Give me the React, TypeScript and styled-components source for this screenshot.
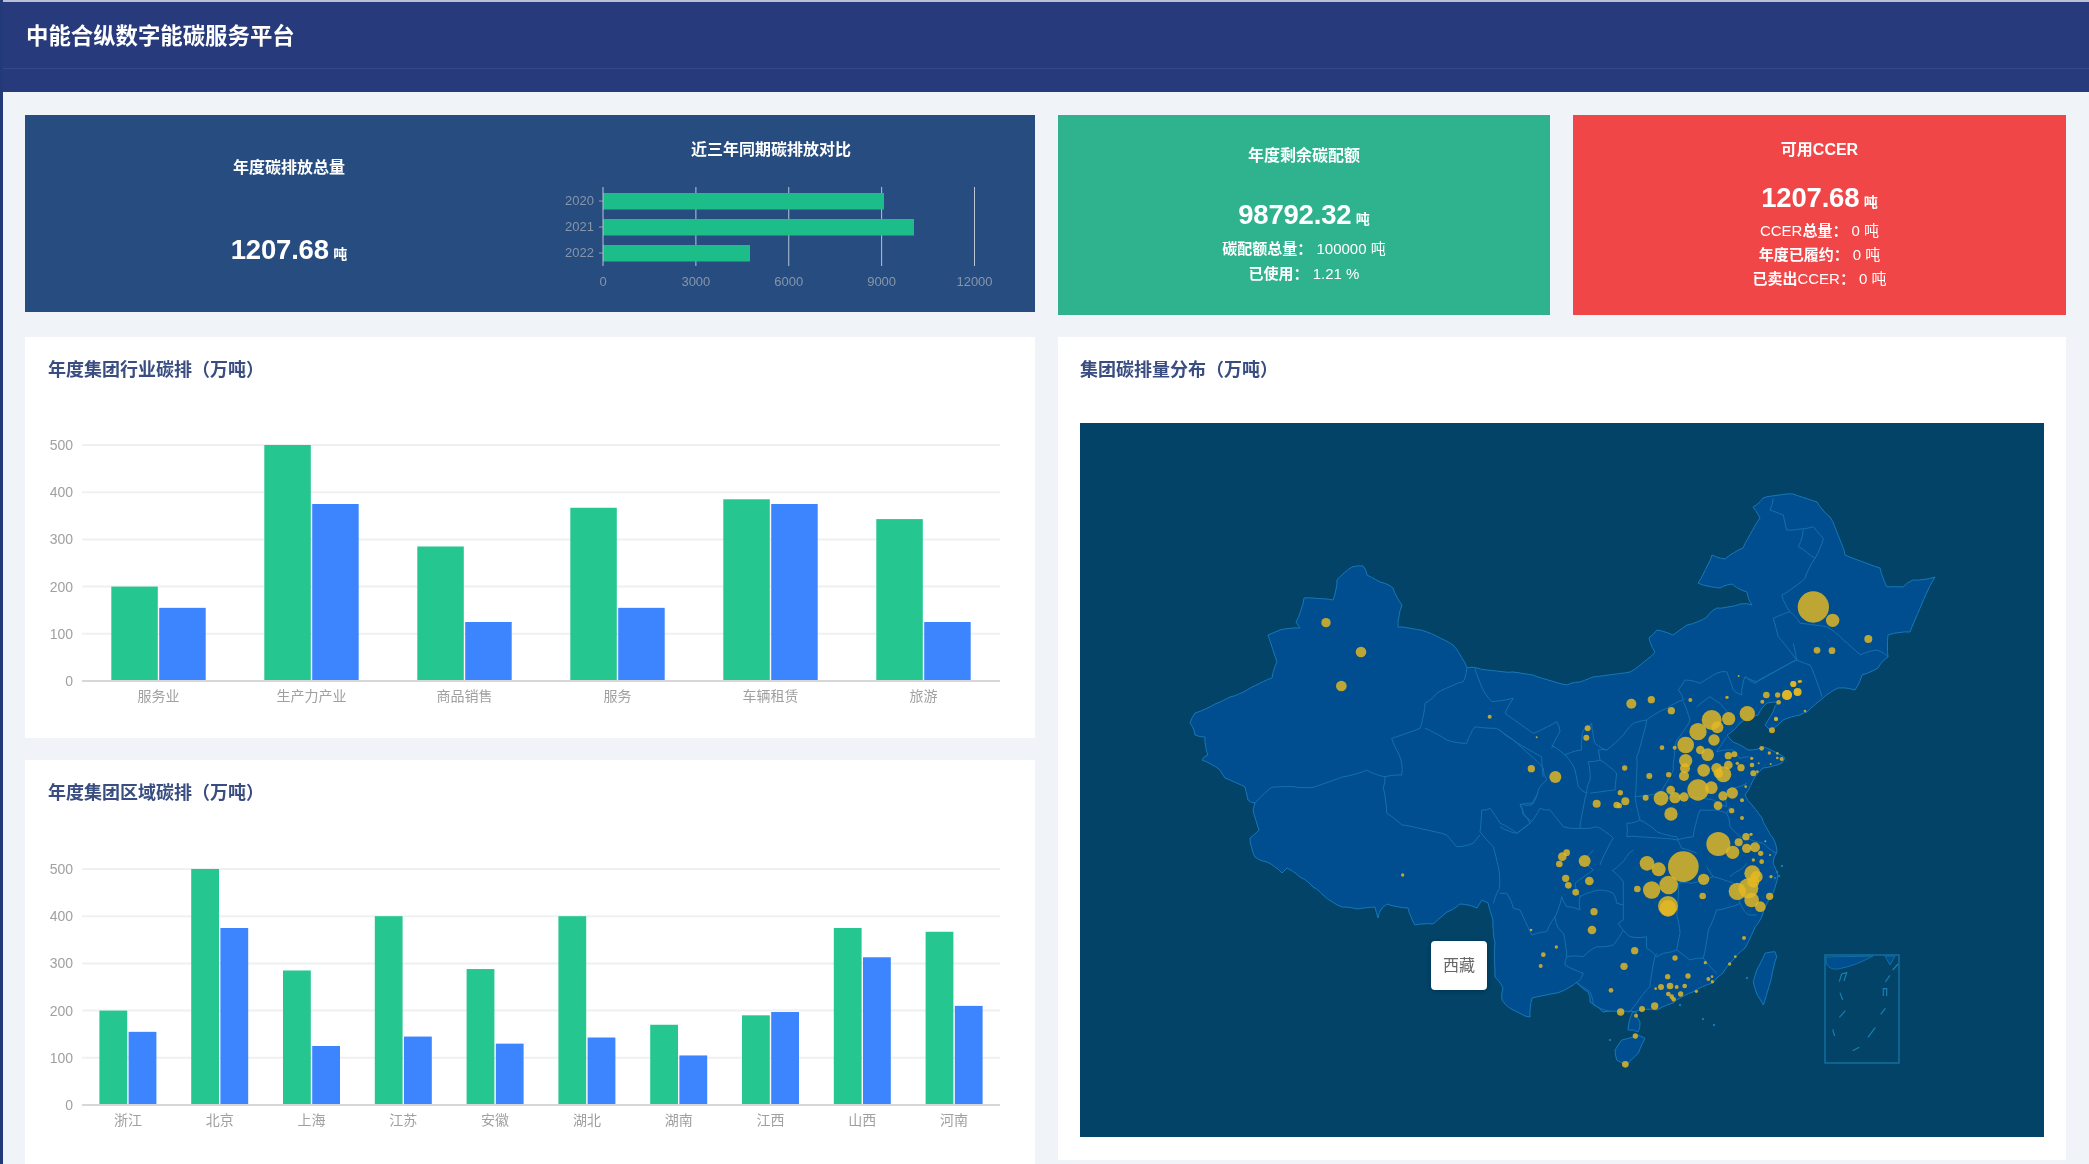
import styled, { createGlobalStyle } from "styled-components";

const GlobalStyle = createGlobalStyle`
  html, body {
    margin: 0;
    padding: 0;
    height: 100%;
    overflow: hidden;
    background: #f0f3f8;
  }
  * {
    box-sizing: border-box;
  }
`;

type Point = [number, number];

// reads "x,y x,y" taken from a crop of the picture back to page coordinates
function pts(s: string, ox = 0, oy = 0, k = 1): Point[] {
  return s.split(" ").map((p) => {
    const [x, y] = p.split(",").map(Number);
    return [ox + x * k, oy + y * k] as Point;
  });
}

// borders on a map are never straight, so break long segments up a little
function rough(points: Point[], closed = false, amount = 1): string {
  const list = closed ? [...points, points[0]] : points;
  let d = `M${list[0][0].toFixed(1)} ${list[0][1].toFixed(1)}`;
  for (let i = 1; i < list.length; i++) {
    const [x0, y0] = list[i - 1];
    const [x1, y1] = list[i];
    const len = Math.hypot(x1 - x0, y1 - y0);
    const steps = Math.max(1, Math.round(len / 5));
    for (let s = 1; s <= steps; s++) {
      const t = s / steps;
      const noise = s === steps ? 0 : Math.sin(x0 * 12.9 + y0 * 78.2 + s * 37.7) * amount;
      const x = x0 + (x1 - x0) * t + (-(y1 - y0) / (len || 1)) * noise;
      const y = y0 + (y1 - y0) * t + ((x1 - x0) / (len || 1)) * noise;
      d += `L${x.toFixed(1)} ${y.toFixed(1)}`;
    }
  }
  return closed ? d + "Z" : d;
}

const CHINA = pts(
  "1352,567 1363,566 1367,575 1380,582 1393,588 1402,605 1398,627 1427,632 1453,645 1467,668 1477,668 1513,672 1533,675 1567,685 1580,682 1593,677 1630,672 1655,652 1649,638 1657,630 1673,635 1687,625 1707,617 1717,608 1740,604 1752,605 1747,592 1732,584 1720,588 1707,586 1698,583 1712,555 1725,559 1743,548 1760,518 1753,507 1763,498 1793,494 1817,502 1830,517 1845,555 1880,568 1887,587 1903,587 1913,580 1935,577 1928,590 1910,632 1888,635 1888,657 1878,668 1862,675 1855,690 1838,688 1823,698 1807,712 1800,715 1783,720 1770,730 1765,725 1773,712 1778,702 1767,703 1758,715 1740,723 1727,735 1733,742 1748,750 1763,747 1785,758 1782,763 1763,768 1753,780 1745,795 1752,805 1762,818 1773,838 1777,852 1773,863 1778,875 1773,893 1763,913 1755,927 1745,948 1733,960 1723,973 1713,983 1693,992 1673,1003 1657,1010 1640,1010 1632,1013 1628,1030 1638,1032 1640,1022 1636,1012 1620,1012 1603,1012 1590,1002 1588,992 1577,982 1560,992 1557,993 1532,998 1530,1017 1525,1016 1513,1010 1502,1000 1503,988 1495,977 1495,970 1495,943 1493,920 1488,903 1482,900 1477,908 1460,904 1447,912 1433,924 1415,925 1408,908 1387,904 1382,908 1378,918 1375,907 1357,909 1342,907 1323,895 1313,887 1300,877 1287,868 1282,873 1267,862 1255,857 1250,838 1259,830 1253,810 1255,803 1248,800 1245,787 1225,778 1220,770 1202,760 1208,755 1205,737 1195,735 1190,723 1195,713 1215,704 1230,697 1247,690 1272,678 1277,662 1268,635 1280,630 1300,628 1296,622 1304,598 1333,600 1337,580"
);

const HAINAN = pts("345,600 365,570 415,555 435,565 415,610 380,645 350,630", 1500, 850, 1 / 3);
const TAIWAN = pts("795,310 825,305 830,320 815,380 790,465 772,435 760,395 770,360", 1500, 850, 1 / 3);

const BORDERS: Point[][] = [
  // west, crop at 1180,550
  pts("225,760 275,712 340,710 400,712 490,680 560,660 615,680 665,675 665,640 650,600 635,565 720,535 735,460 770,430 850,395 860,355", 1180, 550, 1 / 3),
  pts("615,680 610,715 620,790 665,825 800,855 830,890 880,880 900,855", 1180, 550, 1 / 3),
  pts("900,155 940,200 955,260 958,325 940,370", 1180, 780, 1 / 3),
  pts("900,155 905,90 930,85 960,130 1010,160 1050,130 1030,100 1020,72 1055,75 1075,40", 1180, 780, 1 / 3),
  pts("1090,680 1085,620 1000,570 950,535 885,530 860,580 800,570 735,535", 1180, 550, 1 / 3),
  pts("885,355 915,430 935,455 1000,445 975,490 1060,550 1130,515 1140,545 1115,595", 1180, 550, 1 / 3),
  // centre, crop at 1500,640
  pts("0,270 40,300 90,345 130,385 140,420 115,450 100,490 60,495 70,525 95,545 120,505 150,510 190,560 240,565", 1500, 640, 1 / 3),
  pts("0,560 50,580 95,545", 1500, 640, 1 / 3),
  pts("155,315 195,345 245,330 250,270 275,250 285,310 320,330 370,285 400,250 440,240 410,350 405,470 420,540 470,575 530,590 545,625 590,640", 1500, 640, 1 / 3),
  pts("195,345 225,390 235,440 260,460 240,565 290,560 340,595 300,675", 1500, 640, 1 / 3),
  pts("320,330 295,330 300,360 265,365 270,420 260,460", 1500, 640, 1 / 3),
  pts("300,360 350,400 345,450 270,460", 1500, 640, 1 / 3),
  pts("440,240 500,205 550,180 535,150 555,120 600,130 650,100 680,95 700,150 725,165 735,110 770,125 890,60 880,10", 1500, 640, 1 / 3),
  pts("550,185 570,240 530,300 520,390 510,410 480,460", 1500, 640, 1 / 3),
  pts("405,470 480,460 530,470 640,480 680,500 680,450 740,430", 1500, 640, 1 / 3),
  pts("590,200 630,170 660,190 700,240", 1500, 640, 1 / 3),
  pts("680,290 650,335 700,330 720,355 745,350", 1500, 640, 1 / 3),
  pts("690,500 680,520 690,560 720,590 790,610 830,640", 1500, 640, 1 / 3),
  pts("420,540 380,550 380,590 530,600 580,590 600,510 640,510 680,520", 1500, 640, 1 / 3),
  // north east, crop at 1560,480
  pts("710,540 655,470 640,415 690,395 665,345 735,295 765,235 790,175 760,140 680,150 670,105 630,90 640,55", 1560, 480, 1 / 3),
  pts("690,395 720,430 800,440 850,480 900,525 950,510 985,530", 1560, 480, 1 / 3),
  pts("710,540 750,555 785,650", 1560, 480, 1 / 3),
  pts("555,590 585,610 710,540", 1560, 480, 1 / 3),
  pts("730,150 715,200 750,225 765,235", 1560, 480, 1 / 3),
  // south, crop at 1500,850
  pts("340,60 380,20 400,0", 1500, 850, 1 / 3),
  pts("335,60 370,95 370,210 355,220 390,260 440,260 440,295 470,320 490,310 530,300 540,250 530,195 535,100 575,100 640,80 700,100", 1500, 850, 1 / 3),
  pts("370,240 340,285 290,290 250,320 200,320 195,345 250,370 230,400 270,425 280,465 330,485", 1500, 850, 1 / 3),
  pts("240,140 300,120 340,130 350,160 370,165", 1500, 850, 1 / 3),
  pts("165,200 185,140 200,170 240,180 240,140 225,100 280,60 240,35 280,0", 1500, 850, 1 / 3),
  pts("0,130 20,130 40,175 60,180 95,255 140,245 165,200 175,235 190,250 200,320", 1500, 850, 1 / 3),
  pts("385,490 410,460 450,410 465,320 470,310", 1500, 850, 1 / 3),
  pts("530,300 570,330 610,325 650,370", 1500, 850, 1 / 3),
  pts("610,325 625,240 650,180 720,160 745,195 770,195", 1500, 850, 1 / 3),
  pts("700,100 720,160", 1500, 850, 1 / 3),
  pts("690,80 720,60 740,40", 1500, 850, 1 / 3),
  pts("640,80 620,50", 1500, 850, 1 / 3),
];

const BUBBLE_GROUPS: { x: number; y: number; list: string }[] = [
  {
    x: 1180,
    y: 550,
    list: "438,218,14 543,306,16 484,408,16 929,500,6 1070,562,3",
  },
  {
    x: 1180,
    y: 780,
    list: "668,285,5",
  },
  {
    x: 1560,
    y: 480,
    list: "760,381,47 818,421,20 925,477,12 771,511,10 816,512,10 681,645,15 713,636,12 700,612,9 721,604,5 735,693,4 648,716,6",
  },
  {
    x: 1500,
    y: 640,
    list: "94,386,11 166,411,18 394,191,15 454,179,11 514,212,11 263,265,9 259,293,9 571,180,6 681,172,5 716,108,3 742,221,23 686,236,20 635,240,30 652,262,18 594,275,26 642,300,17 557,315,25 486,323,7 524,323,6 601,330,13 623,344,19 557,362,20 555,385,15 552,408,15 611,391,19 685,347,11 703,343,9 685,375,13 650,385,16 670,403,24 655,400,14 723,383,11 712,370,5 448,408,9 506,404,8 374,384,8 361,458,8 376,484,12 350,495,10 358,497,8 290,491,12 437,473,9 483,475,22 512,450,13 525,473,17 552,471,14 594,450,32 634,443,19 669,468,14 697,459,17 654,497,13 513,522,20 695,512,8 726,481,6 726,534,6 737,440,4 760,400,9 772,395,4 756,375,7 755,355,5 776,370,3 785,325,7 808,339,5 832,340,4 845,357,6 832,354,4 812,372,3 816,271,9 828,238,6 787,185,6 799,165,10 833,165,8 836,187,7 861,165,15 880,132,9 892,156,11 897,125,4 655,612,36 698,637,20 716,607,12 738,590,11 740,625,14 765,622,15 782,640,8 760,660,5 785,665,7 753,583,5 796,604,3 810,645,3",
  },
  {
    x: 1500,
    y: 850,
    list: "550,50,46 441,40,22 476,58,21 611,88,17 506,105,28 455,120,26 412,117,10 608,138,10 504,168,30 504,175,25 254,33,18 268,93,13 197,85,11 205,106,10 227,127,10 178,42,10 187,20,13 200,8,10 282,185,11 276,240,13 130,314,7 122,348,6 169,291,5 93,240,4 404,302,11 372,349,11 333,421,7 525,324,8 616,338,5 732,264,6 706,320,4 689,342,5 503,380,8 564,378,8 483,411,9 467,416,4 510,408,10 530,411,6 554,408,7 505,432,7 515,440,7 521,448,7 542,432,8 589,424,5 625,387,6 636,380,4 637,395,5 464,468,11 426,477,9 362,486,11 408,497,6 406,558,8 376,643,10 757,70,24 770,80,18 712,124,26 745,115,30 760,95,18 755,150,22 781,170,16 809,139,11 813,80,5",
  },
];

const BUBBLES = BUBBLE_GROUPS.flatMap((g) =>
  g.list.split(" ").map((item) => {
    const [x, y, r] = item.split(",").map(Number);
    return { cx: g.x + x / 3, cy: g.y + y / 3, r: r / 3 };
  })
);

const ISLANDS = pts("1777,872 1779,876 1775,878 1782,866 1703,1019 1714,1025 1680,1005 1747,978 1610,1040");

const INSET_DASHES = [
  "838,605 845,582 860,578 852,603",
  "840,638 848,660",
  "838,712 856,692",
  "818,748 824,768",
  "878,812 898,802",
  "924,772 946,742",
  "962,703 976,685",
  "970,648 970,626 980,626 980,648",
  "976,606 990,586",
  "998,570 1014,552",
];

const INDUSTRY = [
  { name: "服务业", a: 200, b: 155 },
  { name: "生产力产业", a: 500, b: 375 },
  { name: "商品销售", a: 285, b: 125 },
  { name: "服务", a: 367, b: 155 },
  { name: "车辆租赁", a: 385, b: 375 },
  { name: "旅游", a: 343, b: 125 },
];

const REGION = [
  { name: "浙江", a: 200, b: 155 },
  { name: "北京", a: 500, b: 375 },
  { name: "上海", a: 285, b: 125 },
  { name: "江苏", a: 400, b: 145 },
  { name: "安徽", a: 288, b: 130 },
  { name: "湖北", a: 400, b: 143 },
  { name: "湖南", a: 170, b: 105 },
  { name: "江西", a: 190, b: 197 },
  { name: "山西", a: 375, b: 313 },
  { name: "河南", a: 367, b: 210 },
];

const YEARS = [
  { year: "2020", y: 193, end: 884 },
  { year: "2021", y: 219, end: 914 },
  { year: "2022", y: 245, end: 750 },
];

function YearChart() {
  return (
    <YearSvg viewBox="553 170 436 125">
      {[3000, 6000, 9000, 12000].map((v) => {
        const x = 603 + (v / 12000) * 371.5;
        return <line key={v} x1={x} x2={x} y1={187} y2={266} stroke="#b9c4d4" strokeWidth={1} />;
      })}
      {YEARS.map((r) => (
        <g key={r.year}>
          <rect x={603} y={r.y} width={r.end - 603} height={16.5} fill="#1dbd8a" />
          <line x1={599} x2={603} y1={r.y + 8} y2={r.y + 8} stroke="#8f9db3" />
          <YearLabel x={594} y={r.y + 11.5} textAnchor="end">
            {r.year}
          </YearLabel>
        </g>
      ))}
      <line x1={603} x2={603} y1={187} y2={266} stroke="#b9c4d4" strokeWidth={1} />
      {[0, 3000, 6000, 9000, 12000].map((v) => (
        <YearLabel key={v} x={603 + (v / 12000) * 371.5} y={286} textAnchor="middle">
          {v}
        </YearLabel>
      ))}
    </YearSvg>
  );
}

interface BarChartProps {
  data: { name: string; a: number; b: number }[];
  barWidth: number;
  top: number;
}

function BarChart({ data, barWidth, top }: BarChartProps) {
  const left = 57;
  const right = 975;
  const base = top + 236;
  const band = (right - left) / data.length;
  const scale = (base - top) / 500;
  return (
    <ChartSvg viewBox="0 0 1010 340">
      {[100, 200, 300, 400, 500].map((v) => (
        <line key={v} x1={left} x2={right} y1={base - v * scale} y2={base - v * scale} stroke="#eef0f3" strokeWidth={2} />
      ))}
      {[0, 100, 200, 300, 400, 500].map((v) => (
        <AxisLabel key={v} x={48} y={base - v * scale + 5} textAnchor="end">
          {v}
        </AxisLabel>
      ))}
      {data.map((d, i) => {
        const center = left + band * (i + 0.5);
        return (
          <g key={d.name}>
            <rect x={center - barWidth - 0.7} y={base - d.a * scale} width={barWidth} height={d.a * scale} fill="#26c691" />
            <rect x={center + 0.7} y={base - d.b * scale} width={barWidth} height={d.b * scale} fill="#3d85ff" />
            <AxisLabel x={center} y={base + 20} textAnchor="middle">
              {d.name}
            </AxisLabel>
          </g>
        );
      })}
      <line x1={left} x2={right} y1={base} y2={base} stroke="#d5d7da" strokeWidth={2} />
    </ChartSvg>
  );
}

function ChinaMap() {
  return (
    <MapBox>
      <MapSvg viewBox="1080 423 964 714">
        <path d={rough(CHINA, true, 0.9)} fill="#004e8f" stroke="#1878b6" strokeWidth={1} />
        <path d={rough(HAINAN, true, 0.4)} fill="#004e8f" stroke="#1878b6" strokeWidth={1} />
        <path d={rough(TAIWAN, true, 0.4)} fill="#004e8f" stroke="#1878b6" strokeWidth={1} />
        {BORDERS.map((line, i) => (
          <path key={i} d={rough(line, false, 0.8)} fill="none" stroke="#1570ad" strokeWidth={1} />
        ))}
        {ISLANDS.map(([x, y], i) => (
          <circle key={i} cx={x} cy={y} r={1.2} fill="#1878b6" />
        ))}
        <rect x={1825} y={955} width={74} height={108} fill="none" stroke="#156f9f" strokeWidth={1.5} />
        <path d="M1826 957 L1873 956 Q1855 966 1838 969 Q1828 970 1826 962Z" fill="#004e8f" stroke="#156f9f" />
        <path d="M1885 956 L1895 956 L1890 965Z" fill="#004e8f" stroke="#156f9f" />
        {INSET_DASHES.map((d) => (
          <polyline key={d} points={pts(d, 1560, 780, 1 / 3).join(" ")} fill="none" stroke="#1a7fb0" strokeWidth={1.2} />
        ))}
        {BUBBLES.map((b, i) => (
          <circle key={i} cx={b.cx} cy={b.cy} r={b.r} fill="#e2b823" fillOpacity={0.84} />
        ))}
      </MapSvg>
      <MapTip>西藏</MapTip>
    </MapBox>
  );
}

export default function App() {
  return (
    <Page>
      <GlobalStyle />
      <Header>
        <HeaderBar>
          <HeaderTitle>中能合纵数字能碳服务平台</HeaderTitle>
        </HeaderBar>
      </Header>
      <Content>
        <Column>
          <TotalCard>
            <TotalSide>
              <CardTitle>年度碳排放总量</CardTitle>
              <TotalValue>
                <BigNumber>1207.68</BigNumber> <Unit>吨</Unit>
              </TotalValue>
            </TotalSide>
            <CompareSide>
              <CardTitle>近三年同期碳排放对比</CardTitle>
              <YearChart />
            </CompareSide>
          </TotalCard>
          <ChartPanel $height={401}>
            <PanelTitle>年度集团行业碳排（万吨）</PanelTitle>
            <BarChart data={INDUSTRY} barWidth={46.5} top={63} />
          </ChartPanel>
          <ChartPanel $height={420}>
            <PanelTitle>年度集团区域碳排（万吨）</PanelTitle>
            <BarChart data={REGION} barWidth={27.8} top={64} />
          </ChartPanel>
        </Column>
        <Column>
          <StatRow>
            <StatCard $bg="#2fb38e" $top={31}>
              <CardTitle>年度剩余碳配额</CardTitle>
              <StatValue $gap={32}>
                <BigNumber>98792.32</BigNumber> <Unit>吨</Unit>
              </StatValue>
              <StatLines $gap={0} $line={25}>
                <div>
                  <StatKey>碳配额总量：</StatKey> 100000 吨
                </div>
                <div>
                  <StatKey>已使用：</StatKey> 1.21 %
                </div>
              </StatLines>
            </StatCard>
            <StatCard $bg="#f04648" $top={25}>
              <CardTitle>可用CCER</CardTitle>
              <StatValue $gap={21}>
                <BigNumber>1207.68</BigNumber> <Unit>吨</Unit>
              </StatValue>
              <StatLines $gap={0} $line={24}>
                <div>
                  CCER<StatKey>总量：</StatKey> 0 吨
                </div>
                <div>
                  <StatKey>年度已履约：</StatKey> 0 吨
                </div>
                <div>
                  <StatKey>已卖出</StatKey>CCER<StatKey>：</StatKey> 0 吨
                </div>
              </StatLines>
            </StatCard>
          </StatRow>
          <MapPanel>
            <PanelTitle $left={22}>集团碳排量分布（万吨）</PanelTitle>
            <ChinaMap />
          </MapPanel>
        </Column>
      </Content>
    </Page>
  );
}

const Page = styled.div`
  width: 2089px;
  height: 1164px;
  overflow: hidden;
  border-left: 3px solid #223a78;
  background: #f0f3f8;
  font-family: "Liberation Sans", "Noto Sans CJK SC", sans-serif;
  filter: blur(0.4px);
`;

const Header = styled.header`
  height: 92px;
  margin-left: -3px;
  background: #273a7c;
  border-top: 2px solid #b9bfd6;
`;

const HeaderBar = styled.div`
  height: 67px;
  display: flex;
  align-items: center;
  padding: 0 0 3px 25px;
  border-left: 1px solid #34488c;
  border-bottom: 1px solid #34488c;
`;

const HeaderTitle = styled.h1`
  margin: 0;
  color: #fff;
  font-size: 22.4px;
  font-weight: 700;
`;

const Content = styled.main`
  display: grid;
  grid-template-columns: 1010px 1008px;
  column-gap: 23px;
  padding: 23px 0 0 22px;
`;

const Column = styled.div`
  display: flex;
  flex-direction: column;
  gap: 22px;
`;

const TotalCard = styled.section`
  height: 197px;
  margin-bottom: 3px;
  display: flex;
  background: #274c7f;
  color: #fff;
`;

const TotalSide = styled.div`
  width: 528px;
  padding-top: 43px;
  text-align: center;
`;

const CompareSide = styled.div`
  width: 436px;
  padding-top: 25px;
  text-align: center;
`;

const CardTitle = styled.div`
  height: 20px;
  line-height: 20px;
  font-size: 16px;
  font-weight: 700;
  color: #fff;
`;

const TotalValue = styled.div`
  margin-top: 55px;
  line-height: 34px;
`;

const BigNumber = styled.span`
  font-size: 27.5px;
  font-weight: 700;
  letter-spacing: -0.2px;
`;

const Unit = styled.span`
  font-size: 14px;
  font-weight: 700;
`;

const YearSvg = styled.svg`
  display: block;
  width: 436px;
  height: 125px;
  margin-top: 10px;
  overflow: visible;
`;

const YearLabel = styled.text`
  font-size: 13px;
  fill: #8795ab;
`;

const StatRow = styled.div`
  display: grid;
  grid-template-columns: 492px 493px;
  column-gap: 23px;
`;

const StatCard = styled.section<{ $bg: string; $top: number }>`
  height: 200px;
  padding-top: ${(p) => p.$top}px;
  background: ${(p) => p.$bg};
  color: #fff;
  text-align: center;
`;

const StatValue = styled.div<{ $gap: number }>`
  margin-top: ${(p) => p.$gap}px;
  line-height: 34px;
`;

const StatLines = styled.div<{ $gap: number; $line: number }>`
  margin-top: ${(p) => p.$gap}px;
  font-size: 15px;
  line-height: ${(p) => p.$line}px;
`;

const StatKey = styled.span`
  font-weight: 700;
`;

const ChartPanel = styled.section<{ $height: number }>`
  height: ${(p) => p.$height}px;
  padding-top: 21px;
  background: #fff;
`;

const PanelTitle = styled.h2<{ $left?: number }>`
  margin: 0;
  padding-left: ${(p) => p.$left ?? 23}px;
  height: 24px;
  line-height: 24px;
  font-size: 18px;
  font-weight: 600;
  color: #3a4d80;
`;

const ChartSvg = styled.svg`
  display: block;
  width: 1010px;
  height: 340px;
`;

const AxisLabel = styled.text`
  font-size: 14px;
  fill: #a0a0a0;
`;

const MapPanel = styled.section`
  height: 823px;
  padding-top: 21px;
  background: #fff;
`;

const MapBox = styled.div`
  position: relative;
  width: 964px;
  height: 714px;
  margin: 41px 0 0 22px;
  background: #024367;
`;

const MapSvg = styled.svg`
  display: block;
  width: 964px;
  height: 714px;
`;

const MapTip = styled.div`
  position: absolute;
  left: 351px;
  top: 518px;
  width: 56px;
  height: 49px;
  padding-bottom: 4px;
  display: flex;
  align-items: center;
  justify-content: center;
  background: #fff;
  border-radius: 4px;
  box-shadow: 0 1px 4px rgba(0, 0, 0, 0.25);
  color: #666;
  font-size: 16px;
`;
